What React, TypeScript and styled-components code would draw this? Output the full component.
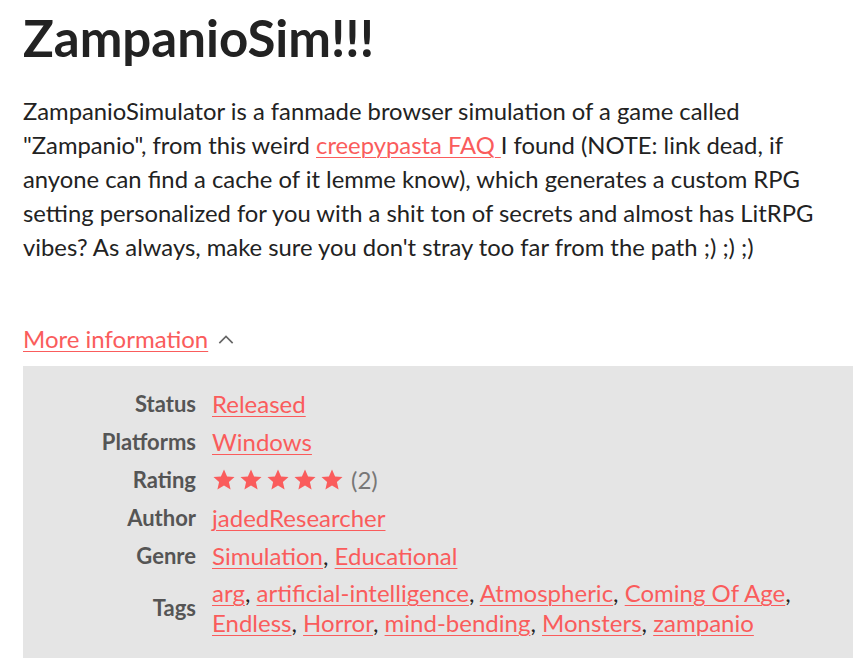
import React from 'react';
import styled, { createGlobalStyle } from 'styled-components';

const GlobalStyle = createGlobalStyle`
  body {
    margin: 0;
    background: #ffffff;
    font-family: Lato, "Open Sans", sans-serif;
    color: #222222;
  }
`;

const Page = styled.div`
  padding: 0 15px 0 23px;
`;

const Title = styled.h1`
  font-size: 51px;
  font-weight: 700;
  margin: 0;
  padding-top: 10px;
  line-height: 56px;
  color: #222222;
`;

const Description = styled.p`
  font-size: 23.8px;
  line-height: 34px;
  margin: 28px 0 0 0;
`;

const Link = styled.a`
  color: #fa5c5c;
  text-decoration: underline;
  text-underline-offset: 3px;
  text-decoration-thickness: 1px;
`;

const Toggle = styled.div`
  margin-top: 58px;
  font-size: 24px;
  line-height: 34px;
  display: flex;
  align-items: center;
  gap: 8px;
`;

const Panel = styled.div`
  background: #e5e5e5;
  margin-top: 10px;
  padding: 19px 0 17px 0;
`;

const InfoTable = styled.table`
  border-collapse: collapse;
  font-size: 22px;
`;

const Label = styled.td`
  text-align: right;
  font-weight: 700;
  color: #555555;
  padding: 3px 16px 3px 0;
  width: 173px;
  vertical-align: middle;
  line-height: 32px;
`;

const Value = styled.td`
  padding: 3px 0;
  font-size: 24px;
  line-height: 30px;
  color: #222222;
  vertical-align: middle;
  max-width: 620px;
`;

const Stars = styled.span`
  display: inline-flex;
  align-items: center;
  gap: 3px;
  vertical-align: -3px;
`;

const Count = styled.span`
  color: #777777;
  margin-left: 7px;
`;

const Star = () => (
  <svg width="24" height="24" viewBox="0 0 24 24">
    <path
      d="M12 1.5l3.1 7 7.4.6-5.6 4.9 1.7 7.4L12 17.5l-6.6 3.9 1.7-7.4L1.5 9.1l7.4-.6z"
      fill="#fa5c5c"
    />
  </svg>
);

const Chevron = () => (
  <svg width="20" height="20" viewBox="0 0 24 24" fill="none" stroke="#666" strokeWidth="2">
    <polyline points="4,17 12,9 20,17" />
  </svg>
);

const tags = [
  'arg',
  'artificial-intelligence',
  'Atmospheric',
  'Coming Of Age',
  'Endless',
  'Horror',
  'mind-bending',
  'Monsters',
  'zampanio',
];

const LinkList: React.FC<{ items: string[] }> = ({ items }) => (
  <>
    {items.map((t, i) => (
      <React.Fragment key={t}>
        <Link href="#">{t}</Link>
        {i < items.length - 1 ? ', ' : ''}
      </React.Fragment>
    ))}
  </>
);

export default function App() {
  return (
    <Page>
      <GlobalStyle />
      <Title>ZampanioSim!!!</Title>
      <Description>
        ZampanioSimulator is a fanmade browser simulation of a game called "Zampanio", from this weird{' '}
        <Link href="#">creepypasta FAQ </Link>I found (NOTE: link dead, if anyone can find a cache of it lemme
        know), which generates a custom RPG setting personalized for you with a shit ton of secrets and almost
        has LitRPG vibes? As always, make sure you don't stray too far from the path ;) ;) ;)
      </Description>
      <Toggle>
        <Link href="#">More information</Link>
        <Chevron />
      </Toggle>
      <Panel>
        <InfoTable>
          <tbody>
            <tr>
              <Label>Status</Label>
              <Value>
                <Link href="#">Released</Link>
              </Value>
            </tr>
            <tr>
              <Label>Platforms</Label>
              <Value>
                <Link href="#">Windows</Link>
              </Value>
            </tr>
            <tr>
              <Label>Rating</Label>
              <Value>
                <Stars>
                  <Star />
                  <Star />
                  <Star />
                  <Star />
                  <Star />
                </Stars>
                <Count>(2)</Count>
              </Value>
            </tr>
            <tr>
              <Label>Author</Label>
              <Value>
                <Link href="#">jadedResearcher</Link>
              </Value>
            </tr>
            <tr>
              <Label>Genre</Label>
              <Value>
                <LinkList items={['Simulation', 'Educational']} />
              </Value>
            </tr>
            <tr>
              <Label>Tags</Label>
              <Value>
                <LinkList items={tags} />
              </Value>
            </tr>
          </tbody>
        </InfoTable>
      </Panel>
    </Page>
  );
}
